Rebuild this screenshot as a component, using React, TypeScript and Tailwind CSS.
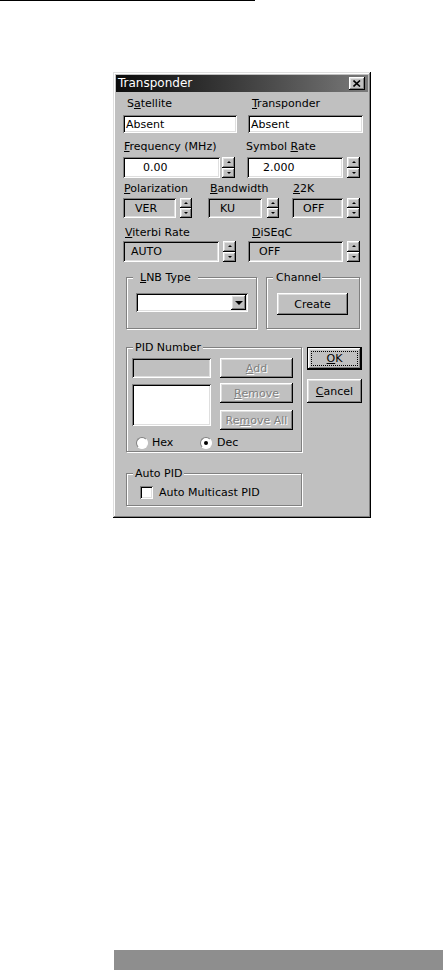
const sunken =
  "shadow-[inset_1px_1px_0_#808080,inset_-1px_-1px_0_#ffffff,inset_2px_2px_0_#000000,inset_-2px_-2px_0_#dfdfdf]";
const raised =
  "shadow-[inset_-1px_-1px_0_#000000,inset_1px_1px_0_#ffffff,inset_-2px_-2px_0_#808080,inset_2px_2px_0_#dfdfdf]";
const etched = "border border-[#808080] shadow-[1px_1px_0_#ffffff,inset_1px_1px_0_#ffffff]";

function Spin({ className = "" }: any) {
  return (
    <div className={`flex flex-col ${className}`}>
      <div className={`flex flex-1 items-center justify-center bg-[#c0c0c0] ${raised}`}>
        <span className="h-0 w-0 border-x-[2px] border-b-[2px] border-x-transparent border-b-black" />
      </div>
      <div className={`flex flex-1 items-center justify-center bg-[#c0c0c0] ${raised}`}>
        <span className="h-0 w-0 border-x-[2px] border-t-[2px] border-x-transparent border-t-black" />
      </div>
    </div>
  );
}

function Field({ className = "", white, children }: any) {
  return (
    <div className={`flex items-center ${white ? "bg-white" : "bg-[#c0c0c0]"} ${sunken} ${className}`}>
      {children}
    </div>
  );
}

function Btn({ className = "", disabled, children }: any) {
  return (
    <div
      className={`flex items-center justify-center bg-[#c0c0c0] ${raised} ${
        disabled ? "text-[#808080] [text-shadow:1px_1px_0_#ffffff]" : "text-black"
      } ${className}`}
    >
      {children}
    </div>
  );
}

function Group({ title, className = "", titleClass = "", children }: any) {
  return (
    <div className={`relative ${etched} ${className}`}>
      <span className={`absolute -top-[7px] left-[6px] bg-[#c0c0c0] leading-[13px] ${titleClass}`}>{title}</span>
      {children}
    </div>
  );
}

export default function App() {
  return (
    <div
      className="flex h-[970px] w-[443px] flex-col bg-white text-[11px] leading-[13px] text-black"
      style={{ fontFamily: '"DejaVu Sans", "Noto Sans", sans-serif' }}
    >
      <div className="h-px w-[255px] bg-black" />

      {/* dialog */}
      <div className="ml-[113px] mt-[71px] h-[446px] w-[258px] bg-[#c0c0c0] p-[3px] shadow-[inset_-1px_-1px_0_#000000,inset_1px_1px_0_#dfdfdf,inset_-2px_-2px_0_#808080,inset_2px_2px_0_#ffffff]">
        <div className="flex h-[17px] items-center justify-between bg-linear-to-r from-[#0c0c0c] to-[#7a7a7a] pl-[2px] pr-[3px]">
          <span className="text-[12px] text-white">Transponder</span>
          <div className={`flex h-[13px] w-[16px] items-center justify-center bg-[#c0c0c0] ${raised}`}>
            <svg width="8" height="7" viewBox="0 0 8 7">
              <path d="M0.5 0.5 L7 6.5 M7 0.5 L0.5 6.5" stroke="#000" strokeWidth="1.6" />
            </svg>
          </div>
        </div>

        {/* row 1 */}
        <div className="mt-[5px] flex h-[13px]">
          <span className="ml-[11px] w-[125px]">
            S<u>a</u>tellite
          </span>
          <span>
            <u>T</u>ransponder
          </span>
        </div>
        <div className="mt-[5px] flex h-[18px]">
          <Field white className="ml-[7px] w-[114px] pl-[3px]">Absent</Field>
          <Field white className="ml-[11px] w-[115px] pl-[3px]">Absent</Field>
        </div>

        {/* row 2 */}
        <div className="mt-[7px] flex h-[13px]">
          <span className="ml-[8px] w-[122px]">
            <u>F</u>requency (MHz)
          </span>
          <span>
            Symbol <u>R</u>ate
          </span>
        </div>
        <div className="mt-[4px] flex h-[21px]">
          <Field white className="ml-[7px] w-[97px] pl-[20px]">0.00</Field>
          <Spin className="ml-[2px] w-[13px]" />
          <Field white className="ml-[12px] w-[96px] pl-[16px]">2.000</Field>
          <Spin className="ml-[4px] w-[13px]" />
        </div>

        {/* row 3 */}
        <div className="mt-[4px] flex h-[13px]">
          <span className="ml-[8px] w-[86px]">
            <u>P</u>olarization
          </span>
          <span className="w-[83px]">
            <u>B</u>andwidth
          </span>
          <span>
            <u>2</u>2K
          </span>
        </div>
        <div className="mt-[3px] flex h-[20px]">
          <Field className="ml-[7px] w-[53px] pl-[12px]">VER</Field>
          <Spin className="ml-[4px] w-[12px]" />
          <Field className="ml-[16px] w-[54px] pl-[12px]">KU</Field>
          <Spin className="ml-[5px] w-[12px]" />
          <Field className="ml-[13px] w-[51px] pl-[11px]">OFF</Field>
          <Spin className="ml-[4px] w-[13px]" />
        </div>

        {/* row 4 */}
        <div className="mt-[8px] flex h-[13px]">
          <span className="ml-[9px] w-[127px]">
            <u>V</u>iterbi Rate
          </span>
          <span>
            <u>D</u>iSEqC
          </span>
        </div>
        <div className="mt-[2px] flex h-[21px]">
          <Field className="ml-[7px] w-[96px] pl-[8px]">AUTO</Field>
          <Spin className="ml-[4px] w-[13px]" />
          <Field className="ml-[12px] w-[95px] pl-[11px]">OFF</Field>
          <Spin className="ml-[4px] w-[13px]" />
        </div>

        {/* LNB / Channel */}
        <div className="mt-[15px] flex h-[52px]">
          <Group
            className="ml-[10px] w-[131px] pl-[9px] pt-[15px]"
            titleClass="px-[7px]"
            title={
              <>
                <u>L</u>NB Type
              </>
            }
          >
            <div className={`flex h-[19px] w-[112px] justify-end bg-white p-[2px] ${sunken}`}>
              <div className={`flex w-[15px] items-center justify-center bg-[#c0c0c0] ${raised}`}>
                <span className="h-0 w-0 border-x-[4px] border-t-[4px] border-x-transparent border-t-black" />
              </div>
            </div>
          </Group>
          <Group className="ml-[9px] w-[94px] pl-[10px] pt-[15px]" titleClass="pl-[3px] pr-[1px]" title="Channel">
            <Btn className="h-[22px] w-[71px]">Create</Btn>
          </Group>
        </div>

        {/* PID */}
        <div className="mt-[18px] flex">
          <Group className="ml-[10px] h-[105px] w-[176px] pl-[5px] pt-[10px]" titleClass="px-[2px]" title="PID Number">
            <div className="flex">
              <div className="flex w-[79px] flex-col">
                <Field className="h-[20px]" />
                <Field white className="mt-[6px] h-[42px]" />
              </div>
              <div className="ml-[9px] flex w-[73px] flex-col">
                <Btn disabled className="h-[20px]">
                  <u>A</u>dd
                </Btn>
                <Btn disabled className="mt-[5px] h-[20px]">
                  <u>R</u>emove
                </Btn>
                <Btn disabled className="mt-[7px] h-[20px]">
                  Re<u>m</u>ove All
                </Btn>
              </div>
            </div>
            <div className="mt-[6px] flex h-[13px] items-center">
              <div className="ml-[4px] flex w-[64px] items-center">
                <span className="h-[12px] w-[12px] rounded-full border border-b-white border-l-[#808080] border-r-white border-t-[#808080] bg-white" />
                <span className="ml-[4px]">Hex</span>
              </div>
              <div className="flex items-center">
                <span className="flex h-[12px] w-[12px] items-center justify-center rounded-full border border-b-white border-l-[#808080] border-r-white border-t-[#808080] bg-white">
                  <span className="h-[4px] w-[4px] rounded-full bg-black" />
                </span>
                <span className="ml-[5px]">Dec</span>
              </div>
            </div>
          </Group>
          <div className="ml-[5px] flex w-[55px] flex-col">
            <div className="h-[23px] border border-black">
              <Btn className="h-full w-full p-[3px]">
                <div className="flex h-full w-full items-center justify-center border border-dotted border-black">
                  <u>O</u>K
                </div>
              </Btn>
            </div>
            <Btn className="mt-[9px] h-[24px]">
              <u>C</u>ancel
            </Btn>
          </div>
        </div>

        {/* Auto PID */}
        <Group className="ml-[10px] mt-[21px] flex h-[33px] w-[176px] items-start pl-[13px] pt-[12px]" titleClass="px-[2px]" title="Auto PID">
          <span className={`h-[13px] w-[13px] bg-white ${sunken}`} />
          <span className="ml-[6px]">Auto Multicast PID</span>
        </Group>
      </div>

      <div className="flex-1" />
      <div className="ml-[114px] h-[20px] bg-[#8e8e8e]" />
    </div>
  );
}
